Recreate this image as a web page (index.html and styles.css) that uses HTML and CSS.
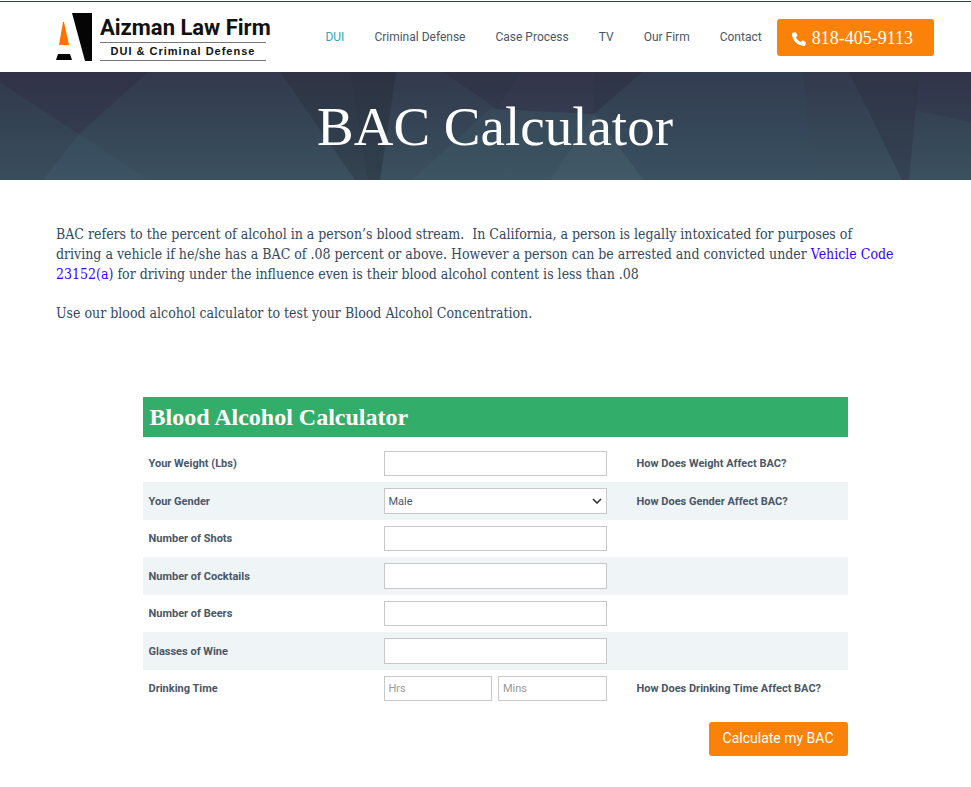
FILE: index.html
```html
<!DOCTYPE html>
<html lang="en">
<head>
    <meta charset="UTF-8">
    <meta name="viewport" content="width=device-width, initial-scale=1.0">
    <title>BAC Calculator - Aizman Law Firm</title>
    <link rel="stylesheet" href="styles.css">
</head>
<body>

    <header class="site-header">
        <a class="logo" href="#">
            <svg class="logo-mark" viewBox="0 0 37 48" aria-hidden="true">
                <polygon points="16,0 36,0 36,48 29,48" fill="#050505"/>
                <polygon points="7,9 8,9 13,32 3,32" fill="#ff7200"/>
                <polygon points="2,41 14,41 16,47 0,47" fill="#050505"/>
            </svg>
            <span class="logo-text">
                <span class="logo-name">Aizman Law Firm</span>
                <span class="logo-tagline">DUI &amp; Criminal Defense</span>
            </span>
        </a>
        <nav class="main-nav">
            <a class="active" href="#">DUI</a>
            <a href="#">Criminal Defense</a>
            <a href="#">Case Process</a>
            <a href="#">TV</a>
            <a href="#">Our Firm</a>
            <a href="#">Contact</a>
        </nav>
        <a class="phone" href="tel:818-405-9113">
            <svg class="phone-icon" viewBox="0 0 14 14" aria-hidden="true">
                <path d="M3.2.2C3.7 0 4 .1 4.200.6L5.300 3.200C5.500 3.700 5.400 4 5 4.300L3.900 5.200C4.800 7.100 6.500 8.900 8.700 10L9.700 8.900C10 8.500 10.300 8.400 10.800 8.600L13.400 9.700C13.900 9.900 14 10.200 13.900 10.700L13.300 13C13.200 13.600 12.800 13.900 12.200 13.900C5.500 13.700 0 8.500 0 1.800C0 1.200.3.900.9.700Z" fill="#fff"/>
            </svg>
            818-405-9113
        </a>
    </header>

    <section class="hero">
        <svg class="hero-bg" viewBox="0 0 971 108" preserveAspectRatio="none" aria-hidden="true">
            <polygon points="0,0 148,0 79,62 0,10" fill="#2e2640" opacity="0.3"/>
            <polygon points="0,10 79,62 43,108 0,108" fill="#2f3646" opacity="0.12"/>
            <polygon points="79,62 148,108 43,108" fill="#42627a" opacity="0.15"/>
            <polygon points="280,0 396,0 380,108 355,108" fill="#292c37" opacity="0.35"/>
            <polygon points="350,0 396,0 380,108 368,108" fill="#222c35" opacity="0.1"/>
            <polygon points="443,0 520,0 497,37 490,32" fill="#2a2b3b" opacity="0.35"/>
            <polygon points="520,0 594,0 594,42 497,37" fill="#352b45" opacity="0.3"/>
            <polygon points="594,0 642,0 594,42" fill="#292c3b" opacity="0.35"/>
            <polygon points="490,37 594,42 550,108 412,108" fill="#4d7078" opacity="0.15"/>
            <polygon points="594,42 550,108 644,108" fill="#54747f" opacity="0.25"/>
            <polygon points="642,0 803,0 814,108 644,108 594,42" fill="#385168" opacity="0.15"/>
            <polygon points="849,0 919,0 909,108 902,108" fill="#2b2c3c" opacity="0.35"/>
            <polygon points="919,0 971,0 971,50 915,38" fill="#332440" opacity="0.2"/>
        </svg>
        <h1>BAC Calculator</h1>
    </section>

    <main>
        <p>BAC refers to the percent of alcohol in a person’s blood stream.&nbsp; In California, a person is legally intoxicated for purposes of driving a vehicle if he/she has a BAC of .08 percent or above. However a person can be arrested and convicted under <a href="#">Vehicle Code 23152(a)</a> for driving under the influence even is their blood alcohol content is less than .08</p>
        <p>Use our blood alcohol calculator to test your Blood Alcohol Concentration.</p>

        <form class="calculator">
            <h2>Blood Alcohol Calculator</h2>
            <div class="rows">
                <div class="row">
                    <label for="weight">Your Weight (Lbs)</label>
                    <input type="text" id="weight" name="weight">
                    <a href="#">How Does Weight Affect BAC?</a>
                </div>
                <div class="row">
                    <label for="gender">Your Gender</label>
                    <div class="select-wrap">
                        <select id="gender" name="gender">
                            <option>Male</option>
                            <option>Female</option>
                        </select>
                        <svg class="chevron" viewBox="0 0 10 6" aria-hidden="true">
                            <path d="M1 1L5 5L9 1" fill="none" stroke="#333" stroke-width="1.6"/>
                        </svg>
                    </div>
                    <a href="#">How Does Gender Affect BAC?</a>
                </div>
                <div class="row">
                    <label for="shots">Number of Shots</label>
                    <input type="text" id="shots" name="shots">
                </div>
                <div class="row">
                    <label for="cocktails">Number of Cocktails</label>
                    <input type="text" id="cocktails" name="cocktails">
                </div>
                <div class="row">
                    <label for="beers">Number of Beers</label>
                    <input type="text" id="beers" name="beers">
                </div>
                <div class="row">
                    <label for="wine">Glasses of Wine</label>
                    <input type="text" id="wine" name="wine">
                </div>
                <div class="row">
                    <label for="hours">Drinking Time</label>
                    <div class="time">
                        <input type="text" id="hours" name="hours" placeholder="Hrs">
                        <input type="text" id="minutes" name="minutes" placeholder="Mins" aria-label="Minutes">
                    </div>
                    <a href="#">How Does Drinking Time Affect BAC?</a>
                </div>
            </div>
            <button type="submit">Calculate my BAC</button>
        </form>
    </main>

</body>
</html>
```
FILE: styles.css
```css
* {
    margin: 0;
    padding: 0;
    box-sizing: border-box;
}
body {
    font-family: Roboto, sans-serif;
    background-color: #fff;
    color: #4a5768;
    padding-top: 1px;
}
a {
    color: inherit;
    text-decoration: none;
}

/* header */
.site-header {
    display: flex;
    align-items: center;
    height: 71px;
    padding: 0 37px 0 56px;
    border-top: 1px solid #c40000;
}
.logo {
    display: flex;
    gap: 7px;
    color: #111;
}
.logo-mark {
    width: 37px;
    height: 48px;
}
.logo-text {
    display: flex;
    flex-direction: column;
    width: 166px;
}
.logo-name {
    font-size: 22px;
    font-weight: bold;
    line-height: 29px;
    white-space: nowrap;
}
.logo-tagline {
    border-top: 1px solid #777;
    border-bottom: 1px solid #777;
    font-family: "Liberation Sans", sans-serif;
    font-size: 11px;
    font-weight: bold;
    letter-spacing: 1px;
    line-height: 17px;
    text-align: center;
    white-space: nowrap;
}
.main-nav {
    display: flex;
    flex: 1;
    justify-content: flex-end;
    gap: 30px;
    margin-right: 15px;
    font-size: 12px;
    white-space: nowrap;
}
.main-nav .active {
    color: #2fa9b8;
}
.phone {
    display: flex;
    align-items: center;
    gap: 6px;
    height: 37px;
    padding: 3px 21px 0 15px;
    border-radius: 3px;
    background-color: #fb8208;
    color: #fff;
    font-family: "Liberation Serif", serif;
    font-size: 18px;
    white-space: nowrap;
}
.phone-icon {
    width: 14px;
    height: 14px;
}

/* title band */
.hero {
    position: relative;
    padding: 2px 37px 0 56px;
    background: linear-gradient(#33394d, #354556 50%, #3b5160);
}
.hero-bg {
    position: absolute;
    top: 0;
    left: 0;
    width: 100%;
    height: 100%;
}
.hero h1 {
    position: relative;
    color: #fff;
    font-family: "Liberation Serif", serif;
    font-size: 55px;
    font-weight: normal;
    line-height: 106px;
    text-align: center;
}

/* content */
main {
    padding: 44px 37px 31px 56px;
}
main p {
    max-width: 840px;
    margin-bottom: 19px;
    color: #34495e;
    font-family: "DejaVu Serif Condensed", "DejaVu Serif", serif;
    font-size: 14px;
    line-height: 20px;
}
main p a {
    color: #3a00ff;
}

/* calculator */
.calculator {
    max-width: 705px;
    margin: 74px auto 0;
}
.calculator h2 {
    padding: 0 7px;
    background-color: #32ae6a;
    color: #fff;
    font-family: "Liberation Serif", serif;
    font-size: 24px;
    line-height: 40px;
}
.rows {
    margin: 8px 0 15px;
}
.row {
    display: grid;
    grid-template-columns: 205px 223px 1fr;
    column-gap: 30px;
    align-items: center;
    height: 37px;
    padding: 0 6px;
    font-size: 11px;
    font-weight: bold;
}
.row:nth-child(even) {
    height: 38px;
    background-color: #eff4f7;
}
.row input,
.row select {
    width: 100%;
    height: 25px;
    padding: 0 4px;
    border: 1px solid #c8c8c8;
    border-radius: 0;
    background-color: #fff;
    color: #4a5768;
    font-family: inherit;
    font-size: 11px;
}
.row:nth-child(even) input,
.row:nth-child(even) select {
    height: 26px;
}
.row input::placeholder {
    color: #999;
}
.select-wrap {
    position: relative;
}
.row select {
    appearance: none;
    display: block;
}
.chevron {
    position: absolute;
    top: 10px;
    right: 5px;
    width: 10px;
    height: 6px;
    pointer-events: none;
}
.time {
    display: flex;
    gap: 6px;
}
.calculator button {
    display: block;
    height: 34px;
    margin-left: auto;
    padding: 0 14px 2px;
    border: none;
    border-radius: 3px;
    background-color: #fb8208;
    color: #fff;
    font-family: inherit;
    font-size: 14px;
    cursor: pointer;
}
@media (max-width: 900px) {
    .site-header {
        flex-wrap: wrap;
        height: auto;
        padding: 12px;
        gap: 12px;
    }
    .main-nav {
        flex-wrap: wrap;
        justify-content: flex-start;
        gap: 12px;
    }
}
@media (max-width: 700px) {
    main,
    .hero {
        padding-left: 16px;
        padding-right: 16px;
    }
    .hero h1 {
        font-size: 40px;
    }
    .row,
    .row:nth-child(even) {
        grid-template-columns: 1fr;
        row-gap: 6px;
        height: auto;
        padding: 6px;
    }
}
```
